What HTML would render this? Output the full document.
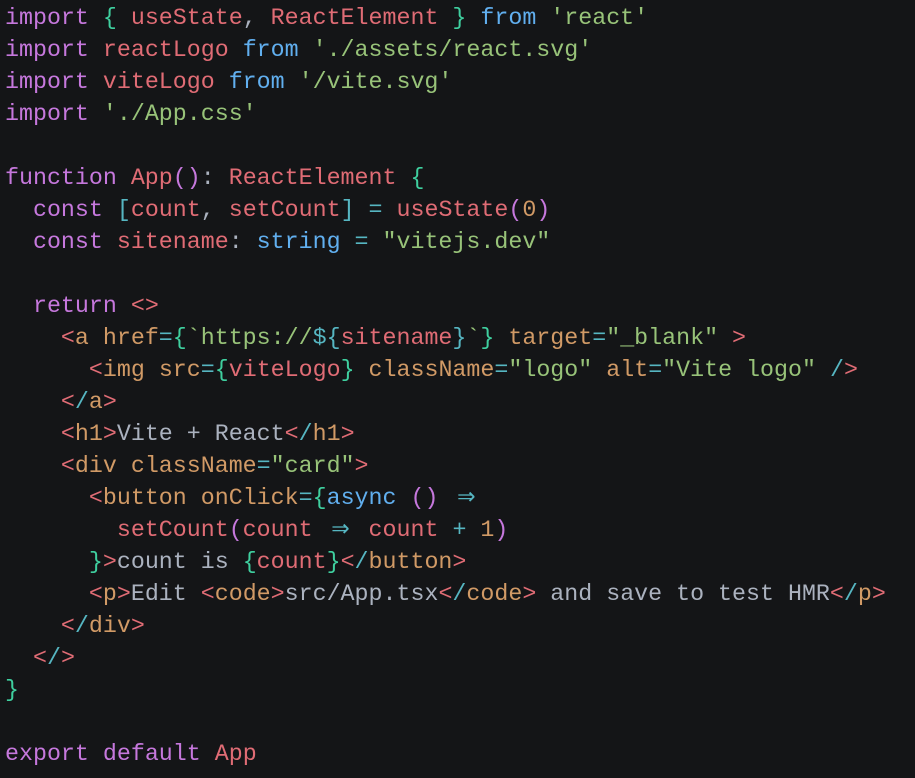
<!DOCTYPE html>
<html><head><meta charset="utf-8"><style>
html,body{margin:0;background:#141517;width:915px;height:778px;overflow:hidden}
pre{margin:0;padding:2px 0 0 5px;font-family:"Liberation Mono","DejaVu Sans Mono",monospace;font-size:23.3px;line-height:32px;color:#abb2bf;white-space:pre}
.k{color:#c678dd}.r{color:#e06c75}.g{color:#98c379}.b{color:#61afef}.c{color:#56b6c2}.t{color:#3fcf9f}.o{color:#d19a66}.w{color:#abb2bf}
.ar{color:#56b6c2;display:inline-block;width:28px;font-family:"DejaVu Sans Mono",monospace;font-size:30px;line-height:20px;vertical-align:-1px;text-align:center}
</style></head><body><pre><span class="k">import</span> <span class="t">{</span> <span class="r">useState</span>, <span class="r">ReactElement</span> <span class="t">}</span> <span class="b">from</span> <span class="g">'react'</span>
<span class="k">import</span> <span class="r">reactLogo</span> <span class="b">from</span> <span class="g">'./assets/react.svg'</span>
<span class="k">import</span> <span class="r">viteLogo</span> <span class="b">from</span> <span class="g">'/vite.svg'</span>
<span class="k">import</span> <span class="g">'./App.css'</span>

<span class="k">function</span> <span class="r">App</span><span class="k">()</span>: <span class="r">ReactElement</span> <span class="t">{</span>
  <span class="k">const</span> <span class="c">[</span><span class="r">count</span>, <span class="r">setCount</span><span class="c">]</span> <span class="c">=</span> <span class="r">useState</span><span class="k">(</span><span class="o">0</span><span class="k">)</span>
  <span class="k">const</span> <span class="r">sitename</span>: <span class="b">string</span> <span class="c">=</span> <span class="g">"vitejs.dev"</span>

  <span class="k">return</span> <span class="r">&lt;&gt;</span>
    <span class="r">&lt;</span><span class="o">a</span> <span class="o">href</span><span class="c">=</span><span class="t">{</span><span class="g">`https://</span><span class="c">${</span><span class="r">sitename</span><span class="c">}</span><span class="g">`</span><span class="t">}</span> <span class="o">target</span><span class="c">=</span><span class="g">"_blank"</span> <span class="r">&gt;</span>
      <span class="r">&lt;</span><span class="o">img</span> <span class="o">src</span><span class="c">=</span><span class="t">{</span><span class="r">viteLogo</span><span class="t">}</span> <span class="o">className</span><span class="c">=</span><span class="g">"logo"</span> <span class="o">alt</span><span class="c">=</span><span class="g">"Vite logo"</span> <span class="c">/</span><span class="r">&gt;</span>
    <span class="r">&lt;</span><span class="c">/</span><span class="o">a</span><span class="r">&gt;</span>
    <span class="r">&lt;</span><span class="o">h1</span><span class="r">&gt;</span>Vite + React<span class="r">&lt;</span><span class="c">/</span><span class="o">h1</span><span class="r">&gt;</span>
    <span class="r">&lt;</span><span class="o">div</span> <span class="o">className</span><span class="c">=</span><span class="g">"card"</span><span class="r">&gt;</span>
      <span class="r">&lt;</span><span class="o">button</span> <span class="o">onClick</span><span class="c">=</span><span class="t">{</span><span class="b">async</span> <span class="k">()</span> <span class="ar">⇒</span>
        <span class="r">setCount</span><span class="k">(</span><span class="r">count</span> <span class="ar">⇒</span> <span class="r">count</span> <span class="c">+</span> <span class="o">1</span><span class="k">)</span>
      <span class="t">}</span><span class="r">&gt;</span>count is <span class="t">{</span><span class="r">count</span><span class="t">}</span><span class="r">&lt;</span><span class="c">/</span><span class="o">button</span><span class="r">&gt;</span>
      <span class="r">&lt;</span><span class="o">p</span><span class="r">&gt;</span>Edit <span class="r">&lt;</span><span class="o">code</span><span class="r">&gt;</span>src/App.tsx<span class="r">&lt;</span><span class="c">/</span><span class="o">code</span><span class="r">&gt;</span> and save to test HMR<span class="r">&lt;</span><span class="c">/</span><span class="o">p</span><span class="r">&gt;</span>
    <span class="r">&lt;</span><span class="c">/</span><span class="o">div</span><span class="r">&gt;</span>
  <span class="r">&lt;</span><span class="c">/</span><span class="r">&gt;</span>
<span class="t">}</span>

<span class="k">export</span> <span class="k">default</span> <span class="r">App</span></pre></body></html>
